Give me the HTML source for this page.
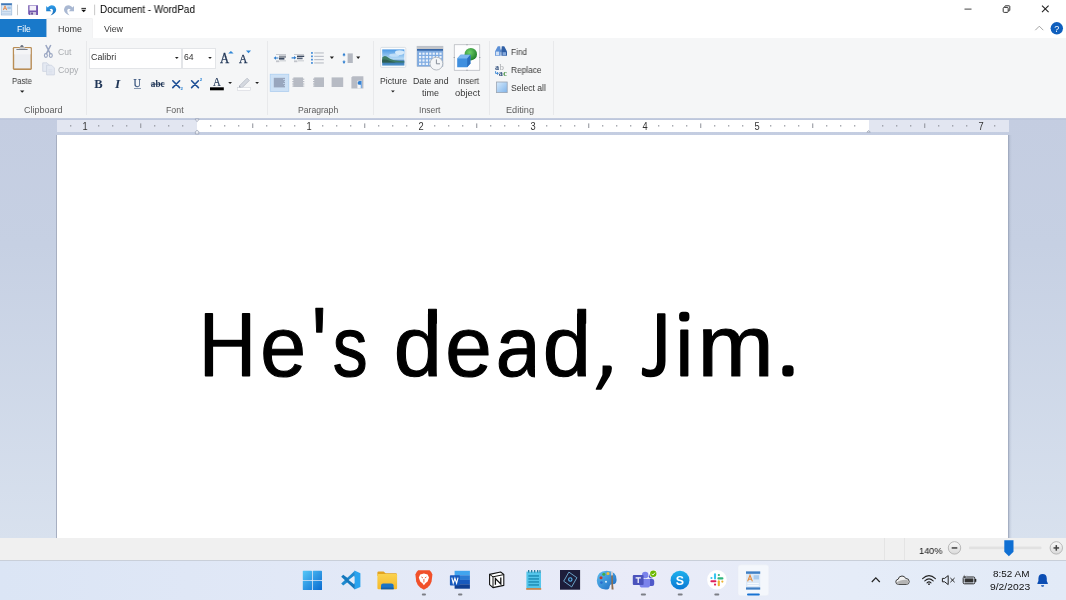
<!DOCTYPE html>
<html><head><meta charset="utf-8"><title>Document - WordPad</title>
<style>
html,body{margin:0;padding:0;}
body{width:1066px;height:600px;position:relative;overflow:hidden;background:#fff;font-family:"Liberation Sans",sans-serif;}
.a{position:absolute;}
.t{will-change:transform;position:absolute;white-space:pre;transform-origin:0 0;font-family:"Liberation Sans",sans-serif;}
svg{position:absolute;overflow:visible;}
</style></head><body>
<!-- TITLE BAR -->
<div class="a" id="titlebar" style="left:0;top:0;width:1066px;height:38px;background:#fff;"></div>
<span class="t" style="left:100.2px;top:4.15px;font-size:10.0px;color:#000;line-height:11.49px;transform:scaleX(0.9899);">Document - WordPad</span>
<!--TITLEICONS-->
<!-- TABS -->
<div class="a" style="left:0;top:37px;width:47px;height:1.2px;background:#f5f6f7;"></div>
<div class="a" style="left:0;top:18.7px;width:46.6px;height:18.4px;background:#1979ca;"></div>
<div class="a" style="left:47.2px;top:18.8px;width:44.7px;height:19.3px;background:#f5f6f7;box-shadow:0 0 0 0.6px #e9eaec;"></div>
<span class="t" style="left:16.5px;top:25.12px;font-size:8.6px;color:#fff;line-height:9.88px;transform:scaleX(0.9741);">File</span>
<span class="t" style="left:57.5px;top:25.12px;font-size:8.6px;color:#383838;line-height:9.88px;transform:scaleX(1.0463);">Home</span>
<span class="t" style="left:103.6px;top:25.12px;font-size:8.6px;color:#383838;line-height:9.88px;transform:scaleX(1.0279);">View</span>
<!-- RIBBON -->
<div class="a" id="ribbon" style="left:0;top:38px;width:1066px;height:79.5px;background:#f5f6f7;"></div>
<div class="a" style="left:86px;top:41px;width:1px;height:74px;background:#e8e9eb;"></div>
<div class="a" style="left:267px;top:41px;width:1px;height:74px;background:#e8e9eb;"></div>
<div class="a" style="left:373px;top:41px;width:1px;height:74px;background:#e8e9eb;"></div>
<div class="a" style="left:489px;top:41px;width:1px;height:74px;background:#e8e9eb;"></div>
<div class="a" style="left:553px;top:41px;width:1px;height:74px;background:#e8e9eb;"></div>
<span class="t" style="left:23.6px;top:105.52px;font-size:8.6px;color:#5c5c5c;line-height:9.88px;transform:scaleX(1.0490);">Clipboard</span>
<span class="t" style="left:165.9px;top:105.52px;font-size:8.6px;color:#5c5c5c;line-height:9.88px;transform:scaleX(1.0231);">Font</span>
<span class="t" style="left:297.7px;top:105.52px;font-size:8.6px;color:#5c5c5c;line-height:9.88px;transform:scaleX(1.0015);">Paragraph</span>
<span class="t" style="left:418.8px;top:105.52px;font-size:8.6px;color:#5c5c5c;line-height:9.88px;transform:scaleX(1.0000);">Insert</span>
<span class="t" style="left:506.0px;top:105.52px;font-size:8.6px;color:#5c5c5c;line-height:9.88px;transform:scaleX(1.0654);">Editing</span>
<span class="t" style="left:12.0px;top:77.32px;font-size:8.6px;color:#383838;line-height:9.88px;transform:scaleX(0.9097);">Paste</span>
<span class="t" style="left:57.9px;top:48.32px;font-size:8.6px;color:#a9acb0;line-height:9.88px;transform:scaleX(0.9869);">Cut</span>
<span class="t" style="left:57.9px;top:66.22px;font-size:8.6px;color:#a9acb0;line-height:9.88px;transform:scaleX(1.0218);">Copy</span>
<!-- font boxes -->
<div class="a" style="left:88.6px;top:47.5px;width:93.2px;height:21.6px;background:#fff;border:1px solid #e3e5e8;box-sizing:border-box;"></div>
<div class="a" style="left:181.8px;top:47.5px;width:33.8px;height:21.6px;background:#fff;border:1px solid #e3e5e8;box-sizing:border-box;"></div>
<span class="t" style="left:91.2px;top:52.92px;font-size:8.6px;color:#333;line-height:9.88px;transform:scaleX(1.0345);">Calibri</span>
<span class="t" style="left:183.6px;top:52.92px;font-size:8.6px;color:#333;line-height:9.88px;transform:scaleX(0.9830);">64</span>
<span class="t" style="left:380.0px;top:77.32px;font-size:8.6px;color:#383838;line-height:9.88px;transform:scaleX(1.0093);">Picture</span>
<span class="t" style="left:413.0px;top:77.32px;font-size:8.6px;color:#383838;line-height:9.88px;transform:scaleX(1.0175);">Date and</span>
<span class="t" style="left:421.5px;top:89.22px;font-size:8.6px;color:#383838;line-height:9.88px;transform:scaleX(1.0462);">time</span>
<span class="t" style="left:457.5px;top:77.32px;font-size:8.6px;color:#383838;line-height:9.88px;transform:scaleX(0.9767);">Insert</span>
<span class="t" style="left:455.0px;top:89.22px;font-size:8.6px;color:#383838;line-height:9.88px;transform:scaleX(1.0899);">object</span>
<span class="t" style="left:511.0px;top:48.32px;font-size:8.6px;color:#383838;line-height:9.88px;transform:scaleX(0.9570);">Find</span>
<span class="t" style="left:511.0px;top:66.22px;font-size:8.6px;color:#383838;line-height:9.88px;transform:scaleX(0.9673);">Replace</span>
<span class="t" style="left:511.0px;top:84.22px;font-size:8.6px;color:#383838;line-height:9.88px;transform:scaleX(0.9892);">Select all</span>
<svg style="left:0;top:0" width="1066" height="600" viewBox="0 0 1066 600">
<defs>
<linearGradient id="gsky" x1="0" y1="0" x2="0" y2="1"><stop offset="0" stop-color="#4a98e4"/><stop offset="0.6" stop-color="#b9dcf6"/><stop offset="0.72" stop-color="#2f6fa8"/><stop offset="1" stop-color="#4f93cc"/></linearGradient>
<linearGradient id="gsel" x1="0" y1="0" x2="1" y2="1"><stop offset="0" stop-color="#d8ebfc"/><stop offset="1" stop-color="#7fb4ea"/></linearGradient>
<radialGradient id="ggreen" cx="0.4" cy="0.35" r="0.7"><stop offset="0" stop-color="#6fd16a"/><stop offset="1" stop-color="#1c7a28"/></radialGradient>
<linearGradient id="gundo" x1="0" y1="0" x2="0" y2="1"><stop offset="0" stop-color="#2f9cea"/><stop offset="1" stop-color="#1469b4"/></linearGradient>
</defs>
<!-- ===== title bar icons ===== -->
<g id="appicon">
<rect x="1.2" y="3.4" width="10.6" height="11.6" fill="#dbe8f6" stroke="#8fb0d4" stroke-width="0.6"/>
<rect x="1.2" y="3.4" width="10.6" height="1.8" fill="#3f78b8"/>
<path d="M3.2 10.2 L5 5.8 L6.8 10.2 M3.9 8.7 L6.1 8.7" stroke="#e58540" stroke-width="0.85" fill="none"/>
<rect x="7.4" y="6.6" width="3.4" height="2.6" fill="#9ec1e6"/>
<rect x="2.2" y="11.2" width="8.6" height="0.8" fill="#b5cbe4"/>
<rect x="2.2" y="12.8" width="8.6" height="0.8" fill="#b5cbe4"/>
</g>
<rect x="17.2" y="4.6" width="0.8" height="10.6" fill="#b9b9b9"/>
<rect x="94.3" y="4.6" width="0.8" height="10.6" fill="#b9b9b9"/>
<g id="save">
<path d="M28.2 5.3 H38 V15 H29.2 L28.2 14 Z" fill="#7458b0"/>
<rect x="29.5" y="5.7" width="6.6" height="4.8" fill="#f4f1fa"/>
<rect x="30.3" y="12" width="5.8" height="3" fill="#cfc8e0"/>
<rect x="31.2" y="12.5" width="1.7" height="2.1" fill="#5b4590"/>
</g>
<g id="undo">
<path d="M46.2 6 L46.2 11.2 L51.4 11.2 L49.6 9.4 Q52.2 7.6 53 10.2 Q53.4 12.6 50.6 15.4 Q56.4 13.4 56.2 9.6 Q55.6 5 50.6 5.4 Q48.8 5.8 47.8 7.4 Z" fill="url(#gundo)"/>
</g>
<g id="redo">
<path d="M74 6 L74 11.2 L68.8 11.2 L70.6 9.4 Q68 7.6 67.2 10.2 Q66.8 12.6 69.6 15.4 Q63.8 13.4 64 9.6 Q64.6 5 69.6 5.4 Q71.4 5.8 72.4 7.4 Z" fill="#a9b8d2"/>
</g>
<rect x="81.4" y="7.9" width="4.6" height="0.9" fill="#111"/>
<path d="M81.2 9.8 H86.2 L83.7 12.3 Z" fill="#111"/>
<!-- window controls -->
<rect x="964.5" y="8.6" width="7" height="1" fill="#444"/>
<g fill="none" stroke="#333" stroke-width="1"><rect x="1003.2" y="7.4" width="5" height="5" rx="1"/><path d="M1004.8 7.2 V6.4 Q1004.8 5.8 1005.4 5.8 H1009.2 Q1009.8 5.8 1009.8 6.4 V10.2 Q1009.8 10.8 1009.2 10.8 H1008.4"/></g>
<path d="M1042 5.6 L1048.6 12.2 M1048.6 5.6 L1042 12.2" stroke="#222" stroke-width="1.1" fill="none"/>
<path d="M1035.3 30.2 L1039.3 26.2 L1043.3 30.2" stroke="#999" stroke-width="0.9" fill="none"/>
<circle cx="1056.8" cy="28.3" r="6.2" fill="#0f5fbd"/>
<text x="1056.8" y="31.6" font-size="9" font-family="'Liberation Sans',sans-serif" fill="#fff" text-anchor="middle">?</text>
<!-- ===== clipboard group ===== -->
<g id="paste">
<rect x="12.8" y="46.9" width="19.1" height="23" rx="1.3" fill="#b98d55"/>
<rect x="14.2" y="48.3" width="16.3" height="20.1" fill="#eceef2"/>
<rect x="14.2" y="48.3" width="16.3" height="6" fill="#f4f5f7"/>
<rect x="16.4" y="49.1" width="11.2" height="0.9" fill="#6f747d"/>
<path d="M19 49 L19.8 47.2 H24.8 L25.6 49 Z" fill="#c9ccd2"/>
<path d="M20 47 L21 45.2 Q21.9 44.6 22.8 45.2 L23.8 47 Z" fill="#6b7280"/>
</g>
<path d="M20 90.6 H24.4 L22.2 92.8 Z" fill="#222"/>
<g id="scissors" stroke="#9aa6c2" fill="none">
<path d="M45.8 45 L50.4 54.2 M50.8 45 L46.2 54.2" stroke-width="1.5"/>
<ellipse cx="45.9" cy="55.5" rx="1.5" ry="1.9" stroke-width="1.1"/><ellipse cx="50.8" cy="55.5" rx="1.5" ry="1.9" stroke-width="1.1"/>
</g>
<g id="copy" fill="#e4e9f2" stroke="#c9d0de" stroke-width="0.7">
<path d="M42.7 62.8 H47 L49.4 65.2 V71.4 H42.7 Z"/>
<path d="M46.6 65.2 H51.6 L54.4 68 V74.9 H46.6 Z"/>
<path d="M48.4 69.8 H52.4 M48.4 71.4 H52.4 M48.4 73 H52.4" stroke="#d3d9e5" stroke-width="0.6"/>
</g>
<!-- ===== font group ===== -->
<path d="M175 57 H178.6 L176.8 58.9 Z" fill="#222"/>
<path d="M208.2 57 H211.8 L210 58.9 Z" fill="#222"/>
<g font-family="'Liberation Serif',serif" fill="#1f3556">
<text x="94.3" y="88.1" font-size="13.4" font-weight="bold" textLength="8.4" lengthAdjust="spacingAndGlyphs">B</text>
<text x="114.9" y="88.1" font-size="13.4" font-weight="bold" font-style="italic">I</text>
<text x="133.6" y="86.6" font-size="11.6" fill="#34507a" stroke="#34507a" stroke-width="0.25" textLength="7.4" lengthAdjust="spacingAndGlyphs">U</text>
<rect x="134" y="88.1" width="7" height="0.8" fill="#6b7f9c"/>
<text x="150.8" y="87" font-size="9.4" font-weight="bold" textLength="13.8" lengthAdjust="spacingAndGlyphs">abc</text>
<rect x="150.8" y="83.7" width="13.8" height="0.8" fill="#1f3556"/>
<text x="220.1" y="62.5" font-size="14.6" textLength="9.2" lengthAdjust="spacingAndGlyphs" stroke="#1f3556" stroke-width="0.3">A</text>
<text x="238.9" y="62.5" font-size="12.8" textLength="8.4" lengthAdjust="spacingAndGlyphs" stroke="#1f3556" stroke-width="0.3">A</text>
<text x="213" y="86" font-size="12" textLength="7.8" lengthAdjust="spacingAndGlyphs" stroke="#1f3556" stroke-width="0.2">A</text>
</g>
<path d="M228.2 53.6 L230.9 51 L233.6 53.6 Z" fill="#2f86d6"/>
<path d="M246 50.6 H251 L248.5 53.3 Z" fill="#2f86d6"/>
<g stroke="#1e4f96" stroke-width="1.6" fill="none" stroke-linecap="round">
<path d="M172.8 80.8 L179.6 87.6 M179.6 80.8 L172.8 87.6"/>
<path d="M191.6 80.8 L198.4 87.6 M198.4 80.8 L191.6 87.6"/>
</g>
<text x="180.6" y="89.6" font-size="4.4" font-weight="bold" font-family="'Liberation Sans',sans-serif" fill="#2f86d6">2</text>
<text x="199.8" y="81" font-size="4.4" font-weight="bold" font-family="'Liberation Sans',sans-serif" fill="#2f86d6">2</text>
<rect x="210" y="87.3" width="13.8" height="3" fill="#000"/>
<path d="M228.2 82 H232 L230.1 83.9 Z" fill="#222"/>
<path d="M255.2 82 H259 L257.1 83.9 Z" fill="#222"/>
<g id="highlighter">
<path d="M239.2 86 L247 78.2 L249.4 80.4 L241.8 88 Z" fill="#d5d9e0" stroke="#a9afbb" stroke-width="0.6"/>
<path d="M238.6 88.2 L239.2 86 L241.8 88 Z" fill="#8d94a3"/>
<rect x="237.3" y="87.6" width="13.2" height="2.6" fill="#fff" stroke="#c9cdd4" stroke-width="0.5"/>
</g>
<!-- ===== paragraph group ===== -->
<g id="indentdec">
<rect x="276" y="54" width="10" height="0.9" fill="#c1c4ca"/>
<rect x="279" y="55.6" width="7" height="2.2" fill="#8d939e"/>
<rect x="279" y="57.8" width="5.4" height="1.8" fill="#3c4a60"/>
<rect x="276" y="60.4" width="3.4" height="1.8" fill="#c1c4ca"/>
<rect x="280" y="60.4" width="6" height="0.9" fill="#c1c4ca"/>
<path d="M273.6 58 L276 56.2 V57.4 H278.4 V58.6 H276 V59.8 Z" fill="#2f7fd0"/>
</g>
<g id="indentinc">
<rect x="294" y="54" width="10" height="0.9" fill="#c1c4ca"/>
<rect x="297" y="55.6" width="7.2" height="1.4" fill="#3c4a60"/>
<rect x="297" y="57.6" width="5.6" height="1.6" fill="#55637a"/>
<rect x="294" y="60.4" width="3.4" height="1.8" fill="#c1c4ca"/>
<rect x="298" y="60.4" width="6" height="0.9" fill="#c1c4ca"/>
<path d="M296.4 57.8 L294 56 V57.2 H291.6 V58.4 H294 V59.6 Z" fill="#2f7fd0"/>
</g>
<g id="bullets">
<g fill="#4a90d9"><rect x="311" y="52.1" width="1.9" height="1.7"/><rect x="311" y="55.5" width="1.9" height="1.7"/><rect x="311" y="58.8" width="1.9" height="1.7"/><rect x="311" y="62.1" width="1.9" height="1.7"/></g>
<g fill="#b9bdc6"><rect x="314.2" y="52.4" width="9.6" height="1.1"/><rect x="314.2" y="55.8" width="9.6" height="1.1"/><rect x="314.2" y="59.1" width="9.6" height="1.1"/><rect x="314.2" y="62.4" width="9.6" height="1.1"/></g>
</g>
<path d="M329.8 56.6 H334 L331.9 58.9 Z" fill="#222"/>
<g id="linespacing">
<path d="M342.4 55.2 L344 52.8 L345.6 55.2 H344.6 V56.2 H343.4 V55.2 Z" fill="#2f7fd0"/>
<path d="M342.4 61.5 L344 63.9 L345.6 61.5 H344.6 V60.5 H343.4 V61.5 Z" fill="#2f7fd0"/>
<rect x="347.6" y="53.4" width="5.2" height="9.6" fill="#b4b8c1"/>
</g>
<path d="M356.2 56.6 H360.2 L358.2 58.9 Z" fill="#222"/>
<rect x="270.2" y="74.2" width="18.6" height="17.4" fill="#cde1f6" stroke="#a8cbee" stroke-width="0.7"/>
<g id="alignleft" fill="#8e9cb6">
<rect x="273.8" y="77.8" width="11.2" height="9.6" fill="#98a6be"/>
<g fill="#cde1f6"><rect x="283" y="79" width="2.1" height="0.7"/><rect x="284" y="81" width="1.1" height="0.7"/><rect x="283" y="83" width="2.1" height="0.7"/><rect x="284" y="85" width="1.1" height="0.7"/></g>
</g>
<g id="aligncenter">
<rect x="293.4" y="77.4" width="9.6" height="9.6" fill="#b7bbc4"/>
<g fill="#b7bbc4"><rect x="292.3" y="78.6" width="12" height="1.2"/><rect x="292.3" y="81" width="12" height="1.2"/><rect x="292.3" y="83.4" width="12" height="1.2"/><rect x="292.3" y="85.6" width="12" height="1"/></g>
</g>
<g id="alignright">
<rect x="314.2" y="77.4" width="9.8" height="9.6" fill="#b7bbc4"/>
<g fill="#b7bbc4"><rect x="313" y="78.6" width="11" height="1.2"/><rect x="313" y="81" width="11" height="1.2"/><rect x="313" y="83.4" width="11" height="1.2"/><rect x="313" y="85.6" width="11" height="1"/></g>
</g>
<rect x="331.6" y="77.4" width="11.6" height="9.6" fill="#b7bbc4"/>
<g id="parafmt">
<path d="M352.6 76.2 H363.4 V88.4 H351.4 V77.4 Z" fill="#b7bbc4"/>
<rect x="357.4" y="80.8" width="4.6" height="7.6" fill="#f5f6f7"/>
<path d="M361 81 H359.6 Q357.6 81 357.6 82.9 Q357.6 84.8 359.6 84.8 H361 Z" fill="#2f7fd0"/>
<rect x="360.8" y="81" width="0.9" height="7.2" fill="#4a8fdc"/>
</g>
<!-- ===== insert group ===== -->
<g id="picture">
<rect x="380.6" y="47.4" width="25.2" height="20" rx="1.2" fill="#fcfdfe" stroke="#cfd4dc" stroke-width="0.7"/>
<rect x="382.2" y="49.4" width="22.2" height="16.2" fill="url(#gsky)"/>
<ellipse cx="399.6" cy="52.6" rx="4.6" ry="2.4" fill="#e6f3fd" opacity="0.85"/>
<ellipse cx="394.2" cy="55.2" rx="5" ry="1.6" fill="#d4eafb" opacity="0.7"/>
<path d="M382.2 57.6 Q384.4 55 386.6 56.6 Q390 59.4 394 60.2 Q399 61 404.4 61.6 V62.6 H382.2 Z" fill="#3d7c66"/>
<path d="M382.2 59.6 Q386 59.2 390 61 L396 62.4 H382.2 Z" fill="#2c5d52"/>
</g>
<g id="datetime">
<rect x="417" y="46.2" width="26" height="20.4" fill="#7eabe2" stroke="#a9b4c4" stroke-width="0.5"/>
<rect x="417" y="46.2" width="26" height="2.8" fill="#c2c4c8"/>
<rect x="417" y="49" width="26" height="1.7" fill="#3565a6"/>
<g fill="#e8f1fb">
<rect x="419" y="52.6" width="2.2" height="2.2"/><rect x="422.4" y="52.6" width="2.2" height="2.2"/><rect x="425.8" y="52.6" width="2.2" height="2.2"/><rect x="429.2" y="52.6" width="2.2" height="2.2"/><rect x="432.6" y="52.6" width="2.2" height="2.2"/><rect x="436" y="52.6" width="2.2" height="2.2"/><rect x="439.4" y="52.6" width="2.2" height="2.2"/>
<rect x="419" y="56" width="2.2" height="2.2"/><rect x="422.4" y="56" width="2.2" height="2.2"/><rect x="425.8" y="56" width="2.2" height="2.2"/><rect x="429.2" y="56" width="2.2" height="2.2"/><rect x="432.6" y="56" width="2.2" height="2.2"/><rect x="436" y="56" width="2.2" height="2.2"/><rect x="439.4" y="56" width="2.2" height="2.2"/>
<rect x="419" y="59.4" width="2.2" height="2.2"/><rect x="422.4" y="59.4" width="2.2" height="2.2"/><rect x="425.8" y="59.4" width="2.2" height="2.2"/><rect x="429.2" y="59.4" width="2.2" height="2.2"/>
<rect x="419" y="62.8" width="2.2" height="2.2"/><rect x="422.4" y="62.8" width="2.2" height="2.2"/><rect x="425.8" y="62.8" width="2.2" height="2.2"/><rect x="429.2" y="62.8" width="2.2" height="2.2"/>
</g>
<circle cx="436.4" cy="63.6" r="6.4" fill="#f4f6f8" stroke="#aeb3bb" stroke-width="0.9"/>
<path d="M436.4 59.4 V63.8 H440" stroke="#7d848f" stroke-width="0.9" fill="none"/>
</g>
<g id="insobj">
<rect x="454.2" y="44.8" width="25.6" height="25.4" fill="#fdfdfe" stroke="#9da1a8" stroke-width="0.55"/><g fill="#8a8e95"><rect x="466.5" y="44.3" width="1" height="1"/><rect x="466.5" y="69.7" width="1" height="1"/><rect x="453.7" y="57" width="1" height="1"/><rect x="479.3" y="57" width="1" height="1"/></g>
<circle cx="470.8" cy="54.2" r="6.2" fill="url(#ggreen)"/>
<path d="M457.2 58.6 L460.6 54.8 H470.4 V63.4 L467.2 67.2 H457.2 Z" fill="#3f8fdf"/>
<path d="M457.2 58.6 L460.6 54.8 H470.4 L467.2 58.6 Z" fill="#7db8f0"/>
<path d="M467.2 58.6 L470.4 54.8 V63.4 L467.2 67.2 Z" fill="#2a6fbf"/>
</g>
<path d="M391 90.4 H394.8 L392.9 92.4 Z" fill="#222"/>
<!-- ===== editing group ===== -->
<g id="find">
<path d="M497.8 46.2 H500.2 L500.6 50 V55.8 H495 V51.4 Z" fill="#5b8fd6"/>
<path d="M501.8 46.2 H504.2 L507 51.4 V55.8 H501.4 V50 Z" fill="#2f5fa5"/>
<rect x="500.4" y="49.6" width="1.2" height="2.6" fill="#3c6cb4"/>
<rect x="495.8" y="51.6" width="3.4" height="3.6" fill="#cfe0f6"/>
<rect x="502.6" y="52.2" width="3.4" height="3" fill="#86a9dc"/>
</g>
<g id="replace" font-family="'Liberation Serif',serif">
<text x="495" y="69.6" font-size="8.2" font-weight="bold" fill="#33517e">a</text>
<text x="499.4" y="69.6" font-size="8.8" fill="#a7a9ad">b</text>
<text x="498.8" y="75.8" font-size="8.2" font-weight="bold" fill="#33517e">a</text>
<text x="503.2" y="75.8" font-size="8.2" font-weight="bold" fill="#3b8b3a">c</text>
<path d="M495.6 71.2 V73.4 H498 M497 72.2 L498.4 73.4 L497 74.6" stroke="#2f7fd0" stroke-width="0.9" fill="none"/>
</g>
<rect x="496.4" y="82" width="10.8" height="10.6" fill="url(#gsel)" stroke="#9aa4b2" stroke-width="0.8"/>

</svg>

<!-- WORKSPACE -->
<div class="a" id="work" style="left:0;top:117.5px;width:1066px;height:421px;background:linear-gradient(#c4cde1,#c6d0e3 30%,#d8e1ee);"></div>
<!-- ruler -->
<div class="a" style="left:0;top:117.5px;width:1066px;height:2.6px;background:linear-gradient(#cfd5e3,#bcc6dc 40%,#bec8dd);"></div>
<div class="a" style="left:57px;top:120.2px;width:951.5px;height:11.7px;background:#e2e6f1;"></div>
<div class="a" style="left:197.2px;top:120.2px;width:671.4px;height:11.7px;background:#fff;"></div>
<svg style="left:0;top:0" width="1066" height="600" viewBox="0 0 1066 600">
<g fill="#8d9098">
<rect x="70.25" y="125" width="1" height="1.6"/>
<rect x="98.25" y="125" width="1" height="1.6"/>
<rect x="112.25" y="125" width="1" height="1.6"/>
<rect x="126.25" y="125" width="1" height="1.6"/>
<rect x="140.25" y="123.4" width="1" height="4.6"/>
<rect x="154.25" y="125" width="1" height="1.6"/>
<rect x="168.25" y="125" width="1" height="1.6"/>
<rect x="182.25" y="125" width="1" height="1.6"/>
<rect x="210.25" y="125" width="1" height="1.6"/>
<rect x="224.25" y="125" width="1" height="1.6"/>
<rect x="238.25" y="125" width="1" height="1.6"/>
<rect x="252.25" y="123.4" width="1" height="4.6"/>
<rect x="266.25" y="125" width="1" height="1.6"/>
<rect x="280.25" y="125" width="1" height="1.6"/>
<rect x="294.25" y="125" width="1" height="1.6"/>
<rect x="322.25" y="125" width="1" height="1.6"/>
<rect x="336.25" y="125" width="1" height="1.6"/>
<rect x="350.25" y="125" width="1" height="1.6"/>
<rect x="364.25" y="123.4" width="1" height="4.6"/>
<rect x="378.25" y="125" width="1" height="1.6"/>
<rect x="392.25" y="125" width="1" height="1.6"/>
<rect x="406.25" y="125" width="1" height="1.6"/>
<rect x="434.25" y="125" width="1" height="1.6"/>
<rect x="448.25" y="125" width="1" height="1.6"/>
<rect x="462.25" y="125" width="1" height="1.6"/>
<rect x="476.25" y="123.4" width="1" height="4.6"/>
<rect x="490.25" y="125" width="1" height="1.6"/>
<rect x="504.25" y="125" width="1" height="1.6"/>
<rect x="518.25" y="125" width="1" height="1.6"/>
<rect x="546.25" y="125" width="1" height="1.6"/>
<rect x="560.25" y="125" width="1" height="1.6"/>
<rect x="574.25" y="125" width="1" height="1.6"/>
<rect x="588.25" y="123.4" width="1" height="4.6"/>
<rect x="602.25" y="125" width="1" height="1.6"/>
<rect x="616.25" y="125" width="1" height="1.6"/>
<rect x="630.25" y="125" width="1" height="1.6"/>
<rect x="658.25" y="125" width="1" height="1.6"/>
<rect x="672.25" y="125" width="1" height="1.6"/>
<rect x="686.25" y="125" width="1" height="1.6"/>
<rect x="700.25" y="123.4" width="1" height="4.6"/>
<rect x="714.25" y="125" width="1" height="1.6"/>
<rect x="728.25" y="125" width="1" height="1.6"/>
<rect x="742.25" y="125" width="1" height="1.6"/>
<rect x="770.25" y="125" width="1" height="1.6"/>
<rect x="784.25" y="125" width="1" height="1.6"/>
<rect x="798.25" y="125" width="1" height="1.6"/>
<rect x="812.25" y="123.4" width="1" height="4.6"/>
<rect x="826.25" y="125" width="1" height="1.6"/>
<rect x="840.25" y="125" width="1" height="1.6"/>
<rect x="854.25" y="125" width="1" height="1.6"/>
<rect x="882.25" y="125" width="1" height="1.6"/>
<rect x="896.25" y="125" width="1" height="1.6"/>
<rect x="910.25" y="125" width="1" height="1.6"/>
<rect x="924.25" y="123.4" width="1" height="4.6"/>
<rect x="938.25" y="125" width="1" height="1.6"/>
<rect x="952.25" y="125" width="1" height="1.6"/>
<rect x="966.25" y="125" width="1" height="1.6"/>
<rect x="994.25" y="125" width="1" height="1.6"/>
</g>
<g font-family="'Liberation Sans',sans-serif" font-size="10.8" fill="#333" text-anchor="middle">
<text transform="translate(85.1 130.1) scale(0.86 1)">1</text>
<text transform="translate(309.1 130.1) scale(0.86 1)">1</text>
<text transform="translate(421.1 130.1) scale(0.86 1)">2</text>
<text transform="translate(533.1 130.1) scale(0.86 1)">3</text>
<text transform="translate(645.1 130.1) scale(0.86 1)">4</text>
<text transform="translate(757.1 130.1) scale(0.86 1)">5</text>
<text transform="translate(981.1 130.1) scale(0.86 1)">7</text>
</g>
<path d="M195.4 118.9 H198.8 V120 L197.1 121.6 L195.4 120 Z" fill="#e8ebf2" stroke="#8b93a6" stroke-width="0.6"/>
<path d="M195.4 134 V131.6 L197.1 130.2 L198.8 131.6 V134 Z" fill="#e8ebf2" stroke="#8b93a6" stroke-width="0.6"/>
<path d="M866.9 132.2 L868.6 130.4 L870.3 132.2 Z" fill="#e8ebf2" stroke="#8b93a6" stroke-width="0.6"/>
</svg>
<!-- page -->
<div class="a" style="left:1008.4px;top:134.8px;width:4px;height:403.2px;background:linear-gradient(90deg,#98a2b7,rgba(170,180,200,0.35) 45%,rgba(196,205,225,0));"></div>
<div class="a" style="left:56.2px;top:134.8px;width:1.4px;height:403.2px;background:#a7afc1;"></div>
<div class="a" style="left:57.4px;top:134.9px;width:951.1px;height:403.1px;background:#fff;"></div>
<svg style="left:0;top:0" width="1066" height="600" viewBox="0 0 1066 600">
<clipPath id="ca"><rect x="490" y="320" width="44.9" height="70"/></clipPath>
<g fill="#000" stroke="#000" stroke-width="1.1" stroke-linejoin="round" font-family="'Liberation Sans',sans-serif" font-size="100">
<g><text transform="matrix(0.8234 0 0 0.8566 260.25 375.89)" vector-effect="non-scaling-stroke">e</text></g>
<g><text transform="matrix(0.7889 0 0 1.0897 311.71 384.46)" vector-effect="non-scaling-stroke">&#39;</text></g>
<g><text transform="matrix(0.6971 0 0 0.8566 332.63 375.89)" vector-effect="non-scaling-stroke">s</text></g>
<rect x="428.55" y="309.25" width="7.80" height="14" />
<g><text transform="matrix(0.8667 0 0 0.8566 393.67 375.89)" vector-effect="non-scaling-stroke">d</text></g>
<g><text transform="matrix(0.8362 0 0 0.8566 445.20 375.89)" vector-effect="non-scaling-stroke">e</text></g>
<g clip-path="url(#ca)"><text transform="matrix(0.8092 0 0 0.8566 495.71 375.89)" vector-effect="non-scaling-stroke">a</text></g>
<rect x="577.83" y="309.25" width="7.82" height="14" />
<g><text transform="matrix(0.8689 0 0 0.8566 542.86 375.89)" vector-effect="non-scaling-stroke">d</text></g>
<g><text transform="matrix(0.9157 0 0 0.8670 697.57 375.95)" vector-effect="non-scaling-stroke">m</text></g>
</g>
<rect fill="#000" x="204.8" y="312.9" width="8.3" height="63.6" rx="0.8"/>
<rect fill="#000" x="241.9" y="312.9" width="8.3" height="63.6" rx="0.8"/>
<rect fill="#000" x="209" y="339.8" width="37" height="6.9"/>
<path fill="#000" d="M657 314.2 Q657 313.2 658 313.2 H664.5 Q665.5 313.2 665.5 314.2 V361 Q665.5 377.3 650.5 377.3 Q646 377.3 642.6 375.4 Q641.7 374.9 641.8 373.6 L642.1 368.6 Q642.3 367.1 643.8 367.8 Q647 369.7 650.4 369.7 Q657 369.7 657 361.5 Z"/>
<path fill="#000" d="M602.6 365.6 L609.6 365.6 Q612 365.6 611.9 368.5 Q611.8 372.5 609.8 376 L601.6 389.2 Q601.2 389.8 600.4 389.8 L596.3 389.8 Q595.3 389.8 595.8 388.8 L602.4 375 Z"/>
<rect fill="#000" x="680.2" y="329.6" width="8.2" height="46.8" rx="1"/>
<rect fill="#000" x="679.1" y="311.8" width="10.3" height="9.6" rx="3.6"/>
<rect fill="#000" x="782.3" y="365.2" width="11.3" height="11.3" rx="4"/>
</svg>
<!-- STATUS BAR -->
<div class="a" style="left:0;top:538px;width:1066px;height:22px;background:#f0f0f0;"></div>
<span class="t" style="left:918.7px;top:544.92px;font-size:9.7px;color:#111;line-height:11.15px;transform:scaleX(0.9402);">140%</span>
<svg style="left:0;top:0" width="1066" height="600" viewBox="0 0 1066 600">
<defs><linearGradient id="gbtn" x1="0" y1="0" x2="0" y2="1"><stop offset="0" stop-color="#fafafa"/><stop offset="1" stop-color="#d9d9d9"/></linearGradient></defs>
<rect x="884" y="538" width="1" height="22" fill="#e4e4e4"/>
<rect x="904" y="538" width="1" height="22" fill="#e4e4e4"/>
<circle cx="954.5" cy="547.9" r="6.2" fill="url(#gbtn)" stroke="#a9a9a9" stroke-width="0.8"/>
<rect x="951.7" y="547.2" width="5.6" height="1.5" fill="#444"/>
<rect x="969" y="546.6" width="72.5" height="2.6" rx="1" fill="#e1e1e1"/>
<path d="M1004.3 540.2 H1013.5 V551.8 L1008.9 556.2 L1004.3 551.8 Z" fill="#0f6fd3"/>
<circle cx="1056.3" cy="547.9" r="6.2" fill="url(#gbtn)" stroke="#a9a9a9" stroke-width="0.8"/>
<rect x="1053.5" y="547.2" width="5.6" height="1.5" fill="#444"/>
<rect x="1055.55" y="545.1" width="1.5" height="5.6" fill="#444"/>
</svg>

<!-- TASKBAR -->
<div class="a" style="left:0;top:560px;width:1066px;height:40px;background:linear-gradient(90deg,#dbe5f5,#e3e9f7 35%,#e9ebf8 60%,#e5ecf8 80%,#e2eaf7);border-top:1px solid #c9cfd9;box-sizing:border-box;"></div>
<svg style="left:0;top:0" width="1066" height="600" viewBox="0 0 1066 600">
<defs>
<linearGradient id="gwin" gradientUnits="userSpaceOnUse" x1="302.8" y1="570.8" x2="322" y2="590"><stop offset="0" stop-color="#55c8f8"/><stop offset="1" stop-color="#0a6ad0"/></linearGradient>
<linearGradient id="gskype" x1="0" y1="0" x2="0" y2="1"><stop offset="0" stop-color="#1fb0ec"/><stop offset="1" stop-color="#0a78d4"/></linearGradient>
<linearGradient id="gpaint" x1="0" y1="0" x2="1" y2="1"><stop offset="0" stop-color="#5fc0f0"/><stop offset="1" stop-color="#1a66c0"/></linearGradient>
<linearGradient id="gfold" x1="0" y1="0" x2="0" y2="1"><stop offset="0" stop-color="#fbd24e"/><stop offset="1" stop-color="#f4b92c"/></linearGradient>
</defs>
<!-- active app bg -->
<rect x="738" y="564.8" width="30.8" height="31" rx="2.5" fill="#f4f7fc" stroke="#e9edf5" stroke-width="0.6"/>
<!-- start -->
<g fill="url(#gwin)"><rect x="302.8" y="570.8" width="9.2" height="9.2" rx="0.6"/><rect x="312.8" y="570.8" width="9.2" height="9.2" rx="0.6"/><rect x="302.8" y="580.8" width="9.2" height="9.2" rx="0.6"/><rect x="312.8" y="580.8" width="9.2" height="9.2" rx="0.6"/></g>
<!-- vscode -->
<g id="vscode">
<path d="M354.4 570.6 L360.4 573.2 V587 L354.4 589.6 Z" fill="#2aa3ee"/>
<path d="M354.6 571 L341.2 583.4 L343.2 585.4 L355 576.6 Z" fill="#1f8ad0"/>
<path d="M354.6 589.2 L341.2 576.8 L343.2 574.8 L355 583.6 Z" fill="#1478bd"/>
<path d="M354.4 575.6 V584.6 L348.6 580.1 Z" fill="#e4ebf7"/>
</g>
<!-- folder -->
<g id="folder">
<path d="M377.4 572.6 Q377.4 571.4 378.6 571.4 H383.6 L385.6 573.2 H395.8 Q397 573.2 397 574.4 V576 H377.4 Z" fill="#e3a420"/>
<rect x="377.4" y="574" width="19.7" height="15.2" rx="1.2" fill="url(#gfold)"/>
<path d="M381 589.2 V585.6 Q381 583.4 383.2 583.4 H391.4 Q393.6 583.4 393.6 585.6 V589.2 Z" fill="#1a74c6"/>
<rect x="381" y="587.6" width="12.6" height="1.6" fill="#155fa8"/>
</g>
<!-- brave -->
<g id="brave">
<path d="M418.2 570.2 H429.6 L431.2 572 L432.4 574.6 L431.6 581.6 Q430.8 585 427.6 587.4 L423.9 589.8 L420.2 587.4 Q417 585 416.2 581.6 L415.4 574.6 L416.6 572 Z" fill="#f1502a"/>
<path d="M420.2 574.4 L423.9 573.6 L427.6 574.4 L429 577.4 L427.6 581.4 L425.4 583.2 L423.9 585.2 L422.4 583.2 L420.2 581.4 L418.8 577.4 Z" fill="#fff"/>
<path d="M421.4 577 L423 578 M426.4 577 L424.8 578 M423.9 579 V582.4" stroke="#f1502a" stroke-width="0.9" fill="none"/>
</g>
<rect x="421.8" y="593.4" width="4.2" height="2.1" rx="1.05" fill="#7c7f86"/>
<!-- word -->
<g id="word">
<rect x="454.6" y="570.8" width="15.3" height="4.6" fill="#41a5ee"/>
<rect x="454.6" y="575.3" width="15.3" height="4.6" fill="#2b7cd3"/>
<rect x="454.6" y="579.8" width="15.3" height="4.6" fill="#185abd"/>
<rect x="454.6" y="584.3" width="15.3" height="4.4" fill="#103f91"/>
<rect x="449.9" y="575.2" width="10" height="10.4" rx="0.8" fill="#185abd"/>
<path d="M451.8 577.6 L453.2 583.2 L454.9 578.2 L456.6 583.2 L458 577.6" stroke="#fff" stroke-width="1.1" fill="none"/>
</g>
<rect x="458" y="593.4" width="4.4" height="2.1" rx="1.05" fill="#7c7f86"/>
<!-- notion -->
<g id="notion">
<path d="M489.6 574.4 L500.6 572 L503.8 574.4 V585.4 L493 587.6 L489.6 584.6 Z" fill="#fff" stroke="#111" stroke-width="1.1" stroke-linejoin="round"/>
<path d="M489.6 574.4 L493 576.8 L503.8 574.6 M493 576.8 V587.4" stroke="#111" stroke-width="1" fill="none"/>
<path d="M495.4 584.8 V578.6 L500.8 584 V577.6" stroke="#111" stroke-width="1.3" fill="none"/>
</g>
<!-- notepad -->
<g id="notepad">
<rect x="526.4" y="571.6" width="14.6" height="16.8" fill="#54c5ea"/>
<g fill="#2b7e9e"><rect x="528" y="570" width="1.3" height="2.6"/><rect x="531" y="570" width="1.3" height="2.6"/><rect x="534" y="570" width="1.3" height="2.6"/><rect x="537" y="570" width="1.3" height="2.6"/><rect x="539.4" y="570" width="1.1" height="2.6"/></g>
<g fill="#1e8db6"><rect x="528.4" y="575.2" width="10.6" height="1.5"/><rect x="528.4" y="578.2" width="10.6" height="1.5"/><rect x="528.4" y="581.2" width="10.6" height="1.5"/><rect x="528.4" y="584.2" width="10.6" height="1.5"/></g>
<rect x="526.2" y="588.2" width="15" height="1.5" fill="#c8742c"/>
</g>
<!-- dark app -->
<g id="darkapp">
<rect x="560" y="570" width="20.1" height="19.7" fill="#1d1d3a"/>
<path d="M563.7 581.2 L568.9 572.1 L576.9 577.7 L571.7 586.9 Z" fill="none" stroke="#7cc3ea" stroke-width="0.8"/>
<circle cx="570.3" cy="579.5" r="1.7" fill="none" stroke="#56b6ee" stroke-width="1.1"/>
</g>
<!-- paint -->
<g id="paint">
<path d="M606.6 570.8 Q616.8 571 616.6 580 Q616.4 584.4 612.6 584.2 Q609.8 583.8 609.6 586.4 Q609.4 589.8 605.4 589.6 Q597 588.8 596.8 580.4 Q597 571.2 606.6 570.8 Z" fill="url(#gpaint)"/>
<circle cx="601" cy="577.8" r="1.5" fill="#c0392b"/><circle cx="603.8" cy="574.2" r="1.5" fill="#3fae49"/><circle cx="608" cy="573.4" r="1.5" fill="#f2c037"/><circle cx="601.4" cy="582.6" r="1.4" fill="#2b6fd0"/><circle cx="606" cy="581.8" r="1" fill="#dff2fd"/>
<path d="M611.2 574.6 L612.8 574.2 L613 584 L613.6 589.4 L611.6 589.6 L611.4 584 Z" fill="#8d6e52"/>
<path d="M610.8 572 L613 571.6 L613 575.2 L611 575.6 Z" fill="#c9ccd2"/>
</g>
<!-- teams -->
<g id="teams">
<circle cx="651.2" cy="576.2" r="2.4" fill="#5059c9"/>
<rect x="647.6" y="579" width="6.6" height="7" rx="2" fill="#5059c9"/>
<circle cx="645.2" cy="575" r="3.2" fill="#7b83eb"/>
<path d="M639.6 579 H650 V585 Q650 587.6 647 587.6 H642.6 Q639.6 587.6 639.6 585 Z" fill="#7b83eb"/>
<rect x="632.8" y="575" width="10.8" height="10" rx="1" fill="#4b53bc"/>
<path d="M635.6 577.8 H640.8 M638.2 577.8 V583" stroke="#fff" stroke-width="1.2" fill="none"/>
<circle cx="653.3" cy="573.8" r="3.9" fill="#fff"/>
<circle cx="653.3" cy="573.8" r="3.2" fill="#6bb700"/>
<path d="M651.6 573.8 L652.9 575.1 L655 572.6" stroke="#fff" stroke-width="0.9" fill="none"/>
</g>
<rect x="640.8" y="593.4" width="5.2" height="2.1" rx="1.05" fill="#7c7f86"/>
<!-- skype -->
<circle cx="680" cy="580.2" r="9.4" fill="url(#gskype)"/>
<text x="680" y="584.6" font-family="'Liberation Sans',sans-serif" font-weight="bold" font-size="12.4" fill="#fff" text-anchor="middle">S</text>
<rect x="677.7" y="593.4" width="5" height="2.1" rx="1.05" fill="#7c7f86"/>
<!-- slack -->
<g id="slack">
<circle cx="716.9" cy="579.8" r="9.8" fill="#fff"/>
<g stroke-width="2.1" stroke-linecap="round" fill="none">
<path d="M715 574.4 V578.4" stroke="#36c5f0"/><path d="M711.4 578 H711.5" stroke="#36c5f0"/>
<path d="M718.8 575 H718.9 " stroke="#2eb67d"/><path d="M718.4 578.4 H722.4" stroke="#2eb67d"/>
<path d="M718.8 581.2 V585.2" stroke="#ecb22e"/><path d="M722.3 581.6 H722.4" stroke="#ecb22e"/>
<path d="M711.4 581.2 H715.4" stroke="#e01e5a"/><path d="M715 584.6 H715.1" stroke="#e01e5a"/>
</g>
</g>
<rect x="714.3" y="593.4" width="5" height="2.1" rx="1.05" fill="#7c7f86"/>
<!-- wordpad active -->
<g id="wordpad">
<rect x="746" y="571.4" width="14.2" height="18.2" fill="#dce9f7"/>
<rect x="746" y="571.4" width="14.2" height="2.4" fill="#3f7fc4"/>
<path d="M747.6 581.4 L750 575.2 L752.4 581.4 M748.6 579.2 H751.4" stroke="#e58a3a" stroke-width="1.1" fill="none"/>
<rect x="753.6" y="575.2" width="5.4" height="4.2" fill="#a9cbee"/>
<rect x="747.4" y="583" width="11.4" height="1" fill="#f6fafe"/>
<rect x="747.4" y="585" width="11.4" height="1" fill="#f6fafe"/>
<rect x="746" y="587.4" width="14.2" height="2.2" fill="#3f7fc4"/>
</g>
<rect x="747" y="593.4" width="12.8" height="2" rx="1" fill="#1873d3"/>
<!-- tray -->
<path d="M871.8 582 L875.8 577.8 L879.8 582" stroke="#222" stroke-width="1.2" fill="none"/>
<path d="M898.6 584.4 Q895.8 584.4 895.8 581.8 Q895.8 579.6 898.2 579.2 Q898.8 576 902 576 Q904.8 576 905.6 578.4 Q909.2 578.4 909.2 581.6 Q909.2 584.4 906.4 584.4 Z" fill="#f1f1f1" stroke="#3a3a3a" stroke-width="1"/>
<path d="M896.6 582.6 Q900 579.6 906 579.8 Q908.6 580.2 908.8 582 Q908.6 584 906.4 584 H898.6 Q896.8 584 896.6 582.6 Z" fill="#b4b4b4"/>
<g fill="none" stroke="#222" stroke-width="1.1" stroke-linecap="round">
<path d="M922.6 578.6 Q929 572.6 935.4 578.6"/>
<path d="M924.8 580.8 Q929 577 933.2 580.8"/>
<path d="M927 582.8 Q929 581 931 582.8"/>
</g>
<circle cx="929" cy="584.2" r="0.9" fill="#222"/>
<path d="M942.4 578.4 H944.6 L948.2 575.6 V584.6 L944.6 581.8 H942.4 Z" fill="none" stroke="#222" stroke-width="1" stroke-linejoin="round"/>
<path d="M950.4 578 L954.6 582.2 M954.6 578 L950.4 582.2" stroke="#222" stroke-width="1" fill="none"/>
<g id="battery">
<rect x="963.2" y="577" width="11.6" height="6.8" rx="1.2" fill="none" stroke="#222" stroke-width="1"/>
<rect x="964.6" y="578.4" width="8.8" height="4" fill="#333"/>
<rect x="975" y="579" width="1.3" height="2.8" fill="#222"/>
<path d="M962.6 577.4 L964.6 574.6 L964.8 576.4 L967.4 575.4 L965.2 578.4 Z" fill="#222" stroke="#e6edf8" stroke-width="0.5"/>
</g>
<path d="M1042.6 574 Q1046.6 574 1046.8 578.4 V581 L1047.8 583.2 V584 H1037.4 V583.2 L1038.4 581 V578.4 Q1038.6 574 1042.6 574 Z" fill="#0b4db3"/>
<path d="M1041 585.2 H1044.2 Q1044 586.8 1042.6 586.8 Q1041.2 586.8 1041 585.2 Z" fill="#0b4db3"/>
</svg>

<span class="t" style="left:993.3px;top:568.04px;font-size:9.9px;color:#111;line-height:11.38px;transform:scaleX(1.0046);">8:52 AM</span>
<span class="t" style="left:989.5px;top:581.14px;font-size:9.9px;color:#111;line-height:11.38px;transform:scaleX(1.0454);">9/2/2023</span>
</body></html>
